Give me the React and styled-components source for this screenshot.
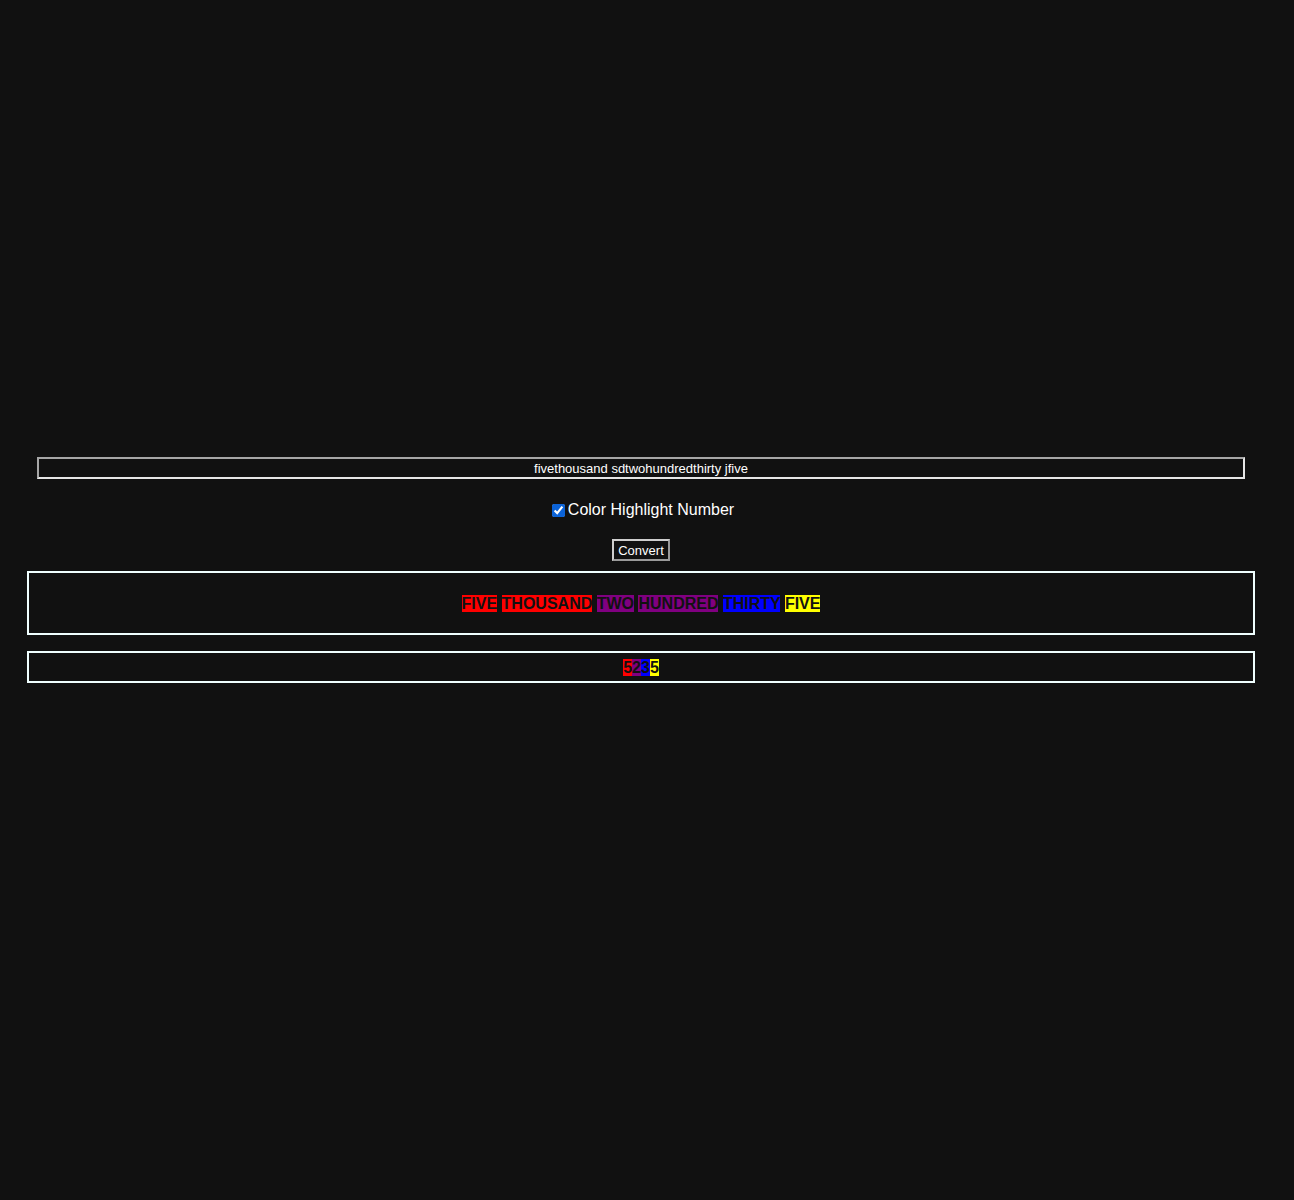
import React, { useState } from 'react';
import styled, { createGlobalStyle } from 'styled-components';

const GlobalStyle = createGlobalStyle`
  html, body {
    margin: 0;
    padding: 0;
    background: #111111;
    color: #ffffff;
    font-family: "Liberation Sans", Arial, sans-serif;
  }
`;

const Page = styled.div`
  width: 1266px;
  margin-left: 8px;
  padding-top: 457px;
  min-height: 1200px;
  box-sizing: border-box;
  display: flex;
  flex-direction: column;
  align-items: center;
`;

const WordsInput = styled.input`
  width: 1208px;
  height: 22px;
  box-sizing: border-box;
  background: #111111;
  color: #ffffff;
  border: 2px solid #a6a6a6;
  border-bottom-color: #e6e6e6;
  border-right-color: #e6e6e6;
  text-align: center;
  font-family: "Liberation Sans", Arial, sans-serif;
  font-size: 13px;
  padding: 0;
  outline: none;
`;

const CheckRow = styled.label`
  margin-top: 21px;
  height: 20px;
  display: flex;
  align-items: center;
  font-size: 16px;
  color: #ffffff;
  cursor: pointer;

  input {
    width: 13px;
    height: 13px;
    margin: 3px 3px 3px 4px;
    accent-color: #0b63d8;
  }
`;

const ConvertButton = styled.button`
  margin-top: 19px;
  height: 22px;
  box-sizing: border-box;
  padding: 0 4px;
  background: #111111;
  color: #ffffff;
  font-family: "Liberation Sans", Arial, sans-serif;
  font-size: 13px;
  border: 2px solid #cfcfcf;
  border-bottom-color: #9a9a9a;
  border-right-color: #9a9a9a;
  cursor: pointer;
`;

const OutputBox = styled.div`
  width: 1228px;
  box-sizing: border-box;
  margin-top: ${p => p.$gap}px;
  border: 2px solid #f0ffff;
  padding: ${p => p.$pad + 1}px 0 ${p => p.$pad - 1}px;
  text-align: center;
  font-size: 16px;
  font-weight: bold;
  line-height: 18px;
  color: #111111;
`;

const Chunk = styled.span`
  background: ${p => p.$bg};
  color: #111111;
`;

const WORDS = [
  ['FIVE', '#ff0000'],
  ['THOUSAND', '#ff0000'],
  ['TWO', '#800080'],
  ['HUNDRED', '#800080'],
  ['THIRTY', '#0000ff'],
  ['FIVE', '#ffff00'],
];

const DIGITS = [
  ['5', '#ff0000'],
  ['2', '#800080'],
  ['3', '#0000ff'],
  ['5', '#ffff00'],
];

export default function App() {
  const [text, setText] = useState('fivethousand sdtwohundredthirty jfive');
  const [highlight, setHighlight] = useState(true);

  return (
    <>
      <GlobalStyle />
      <Page>
        <WordsInput value={text} onChange={e => setText(e.target.value)} />
        <CheckRow>
          <input type="checkbox" checked={highlight} onChange={e => setHighlight(e.target.checked)} />
          Color Highlight Number
        </CheckRow>
        <ConvertButton type="button">Convert</ConvertButton>
        <OutputBox $gap={10} $pad={21}>
          {WORDS.map(([w, bg], i) => (
            <React.Fragment key={i}>
              {i > 0 && ' '}
              <Chunk $bg={highlight ? bg : 'transparent'}>{w}</Chunk>
            </React.Fragment>
          ))}
        </OutputBox>
        <OutputBox $gap={16} $pad={5}>
          {DIGITS.map(([d, bg], i) => (
            <Chunk key={i} $bg={highlight ? bg : 'transparent'}>{d}</Chunk>
          ))}
        </OutputBox>
      </Page>
    </>
  );
}
